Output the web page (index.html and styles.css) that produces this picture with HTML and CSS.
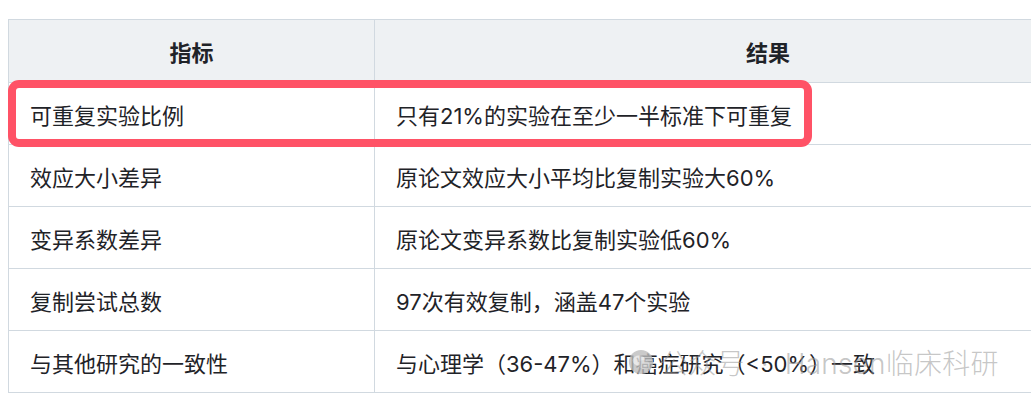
FILE: index.html
```html
<!DOCTYPE html>
<html lang="zh-CN">
<head>
    <meta charset="UTF-8">
    <title>复制实验结果</title>
    <link rel="stylesheet" href="styles.css">
</head>
<body>
    <div class="sheet">
        <table class="result-table">
            <thead>
                <tr>
                    <th class="col-metric">指标</th>
                    <th class="col-result">结果</th>
                </tr>
            </thead>
            <tbody>
                <tr>
                    <td>可重复实验比例</td>
                    <td>只有21%的实验在至少一半标准下可重复</td>
                </tr>
                <tr>
                    <td>效应大小差异</td>
                    <td>原论文效应大小平均比复制实验大60%</td>
                </tr>
                <tr>
                    <td>变异系数差异</td>
                    <td>原论文变异系数比复制实验低60%</td>
                </tr>
                <tr>
                    <td>复制尝试总数</td>
                    <td>97次有效复制，涵盖47个实验</td>
                </tr>
                <tr>
                    <td>与其他研究的一致性</td>
                    <td>与心理学（36-47%）和癌症研究（&lt;50%）一致</td>
                </tr>
            </tbody>
        </table>

        <!-- red marker drawn over the first data row -->
        <div class="highlight"></div>

        <div class="watermark">
            <svg class="wm-icon" viewBox="0 0 28 28" width="26" height="26">
                <circle cx="14" cy="14" r="13" fill="#bdbdbd"/>
                <ellipse cx="12" cy="12.5" rx="7" ry="5.5" fill="#e3e3e3"/>
                <ellipse cx="17" cy="16.5" rx="6" ry="4.6" fill="#d4d4d4"/>
            </svg>
            <span>公众号 · Hansen临床科研</span>
        </div>
    </div>
</body>
</html>
```

FILE: styles.css
```css
/* Result table */

:root {
    --text: #1f2328;
    --line: #d1d9e0;
    --head-bg: #eef1f3;
    --marker: #ff5266;
}

html, body {
    overflow: hidden;
}

body {
    margin: 0;
    background: #fff;
    font-family: Inter, "Noto Sans CJK SC", sans-serif;
    color: var(--text);
}

.sheet {
    position: relative;
    padding: 19px 0 0 8px;
    width: 1200px;
}

.result-table {
    border-collapse: collapse;
    width: 1153px;
    table-layout: fixed;
    font-size: 22px;
}

.result-table th,
.result-table td {
    border: 1px solid var(--line);
    height: 62px;
    box-sizing: border-box;
    padding: 0 21px;
    text-align: left;
    vertical-align: middle;
}

.result-table td {
    font-weight: 400;
}

.result-table th {
    background: var(--head-bg);
    font-weight: 700;
    text-align: center;
    height: 63px;
}

.col-metric { width: 366px; }
.col-result { width: 787px; }

/* overlays */
.highlight {
    position: absolute;
    left: 8px;
    top: 80px;
    width: 804px;
    height: 67px;
    box-sizing: border-box;
    border: 8px solid var(--marker);
    border-radius: 11px;
}

.watermark {
    position: absolute;
    left: 628px;
    top: 342px;
    display: flex;
    align-items: center;
    gap: 6px;
    font-size: 28px;
    font-weight: 300;
    letter-spacing: 0.2px;
    word-spacing: 8px;
    color: rgba(150, 150, 150, 0.55);
    white-space: nowrap;
}

.wm-icon {
    opacity: 0.8;
}
```
